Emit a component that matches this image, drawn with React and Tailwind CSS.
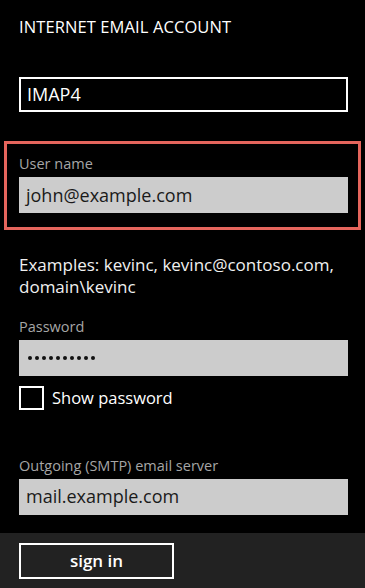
import { useState } from 'react';

const font = { fontFamily: '"Open Sans", "Noto Sans", sans-serif' };

function Field({ label, value, masked }) {
  return (
    <div className="flex flex-col">
      <div className="text-[14.5px] leading-[18px] text-[#a6a6a6]">{label}</div>
      <div className="mt-[4px] h-[36px] w-[329px] bg-[#cccccc] flex items-center pl-[7px] text-[18px] text-[#1a1a1a]">
        {masked ? (
          <span className="flex gap-[3px] pl-[2px]">
            {Array.from({ length: 10 }).map((_, i) => (
              <span key={i} className="block w-[4px] h-[4px] rounded-full bg-[#111]" />
            ))}
          </span>
        ) : (
          value
        )}
      </div>
    </div>
  );
}

export default function App() {
  const [showPassword, setShowPassword] = useState(false);

  return (
    <div className="w-[365px] h-[588px] bg-black text-white flex flex-col overflow-hidden" style={font}>
      <div className="flex-1 flex flex-col px-[19px]">
        <div className="mt-[16px] text-[16.5px] leading-[22px] font-medium tracking-[0.1px]">INTERNET EMAIL ACCOUNT</div>

        <div className="mt-[39px] h-[35px] w-[329px] border-2 border-white flex items-center pl-[6px] text-[18px]">
          IMAP4
        </div>

        {/* highlighted field */}
        <div className="mt-[29px] -mx-[15px] border-[3px] border-[#e5655c] px-[12px] pt-[11px] pb-[14px]">
          <Field label="User name" value="john@example.com" />
        </div>

        <div className="mt-[24px] text-[17px] leading-[22px] text-[#f0f0f0]">
          Examples: kevinc, kevinc@contoso.com,
          <br />
          domain\kevinc
        </div>

        <div className="mt-[20px]">
          <Field label="Password" masked />
        </div>

        <button
          type="button"
          onClick={() => setShowPassword(!showPassword)}
          className="mt-[10px] flex items-center gap-[8px] text-[16.5px]"
        >
          <span className="block w-[25px] h-[24px] border-2 border-white" />
          <span>Show password</span>
        </button>

        <div className="mt-[46px]">
          <Field label="Outgoing (SMTP) email server" value="mail.example.com" />
        </div>
      </div>

      <div className="h-[55px] bg-[#222222] px-[19px] pt-[10px]">
        <button
          type="button"
          className="w-[155px] h-[36px] border-2 border-white flex items-center justify-center text-[17px] font-semibold"
        >
          sign in
        </button>
      </div>
    </div>
  );
}
